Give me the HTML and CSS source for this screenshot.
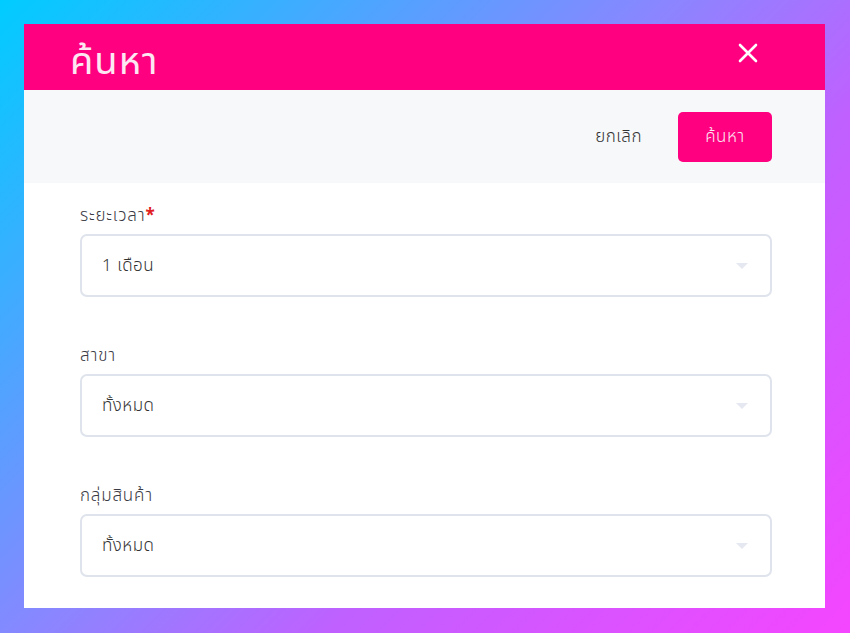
FILE: index.html
```html
<!DOCTYPE html>
<html lang="th">
<head>
<meta charset="utf-8">
<link rel="stylesheet" href="styles.css">
</head>
<body>
<div class="modal">
  <div class="modal-header">
    <h1 class="title">ค้นหา</h1>
    <button class="close" aria-label="close">
      <svg width="20" height="20" viewBox="0 0 20 20"><path d="M2 2 L18 18 M18 2 L2 18" stroke="#fff" stroke-width="2.6" stroke-linecap="round"/></svg>
    </button>
  </div>
  <div class="toolbar">
    <button class="btn-cancel">ยกเลิก</button>
    <button class="btn-search">ค้นหา</button>
  </div>
  <div class="form">
    <div class="field">
      <label class="label">ระยะเวลา<span class="req">*</span></label>
      <div class="select"><span>1 เดือน</span><i class="caret"></i></div>
    </div>
    <div class="field">
      <label class="label">สาขา</label>
      <div class="select"><span>ทั้งหมด</span><i class="caret"></i></div>
    </div>
    <div class="field">
      <label class="label">กลุ่มสินค้า</label>
      <div class="select"><span>ทั้งหมด</span><i class="caret"></i></div>
    </div>
  </div>
</div>
</body>
</html>
```
FILE: styles.css
```css
* { box-sizing: border-box; }
html, body { margin: 0; height: 100%; }
body {
  width: 850px;
  height: 633px;
  padding: 24px 25px 25px 24px;
  background: linear-gradient(135deg, #00ccff 0%, #8a86ff 45%, #c060ff 65%, #f545ff 100%);
  font-family: "Noto Sans", "Noto Sans Thai", "Liberation Sans", sans-serif;
  overflow: hidden;
}
.modal {
  width: 801px;
  height: 584px;
  background: #fff;
  overflow: hidden;
  display: flex;
  flex-direction: column;
}
.modal-header {
  height: 66px;
  flex: none;
  background: #ff0080;
  display: flex;
  align-items: center;
  justify-content: space-between;
  padding: 0 67px 0 46px;
}
.title {
  margin: 0;
  color: #fde7f2;
  font-size: 38px;
  font-weight: 400;
  letter-spacing: 1px;
  line-height: 1;
  padding-top: 4px;
}
.close {
  background: none;
  border: 0;
  padding: 0;
  width: 20px;
  height: 20px;
  margin-top: -9px;
  cursor: pointer;
}
.toolbar {
  height: 93px;
  flex: none;
  background: #f7f8fa;
  display: flex;
  align-items: center;
  justify-content: flex-end;
  padding: 0 53px 0 0;
  gap: 36px;
}
.btn-cancel {
  background: none;
  border: 0;
  font: inherit;
  font-size: 17px;
  font-weight: 300;
  letter-spacing: 0.5px;
  color: #333;
  padding: 0;
}
.btn-search {
  width: 94px;
  height: 50px;
  background: #ff0080;
  color: #fde7f2;
  border: 0;
  border-radius: 5px;
  font: inherit;
  font-size: 17px;
  font-weight: 300;
  letter-spacing: 0.5px;
}
.form {
  flex: none;
  padding: 21px 53px 0 56px;
  display: flex;
  flex-direction: column;
  gap: 47px;
}
.field { display: flex; flex-direction: column; gap: 8px; }
.label {
  font-size: 17px;
  font-weight: 300;
  letter-spacing: 0.8px;
  color: #3b3b45;
  line-height: 22px;
}
.req { color: #e02020; font-weight: 700; }
.select {
  height: 63px;
  flex: none;
  border: 2px solid #dfe3ec;
  border-radius: 7px;
  display: flex;
  align-items: center;
  justify-content: space-between;
  padding: 0 22px 0 20px;
  font-size: 17px;
  font-weight: 300;
  letter-spacing: 0.5px;
  color: #333;
}
.caret {
  width: 0;
  height: 0;
  border-left: 6px solid transparent;
  border-right: 6px solid transparent;
  border-top: 6px solid #e5e8f0;
}
```
